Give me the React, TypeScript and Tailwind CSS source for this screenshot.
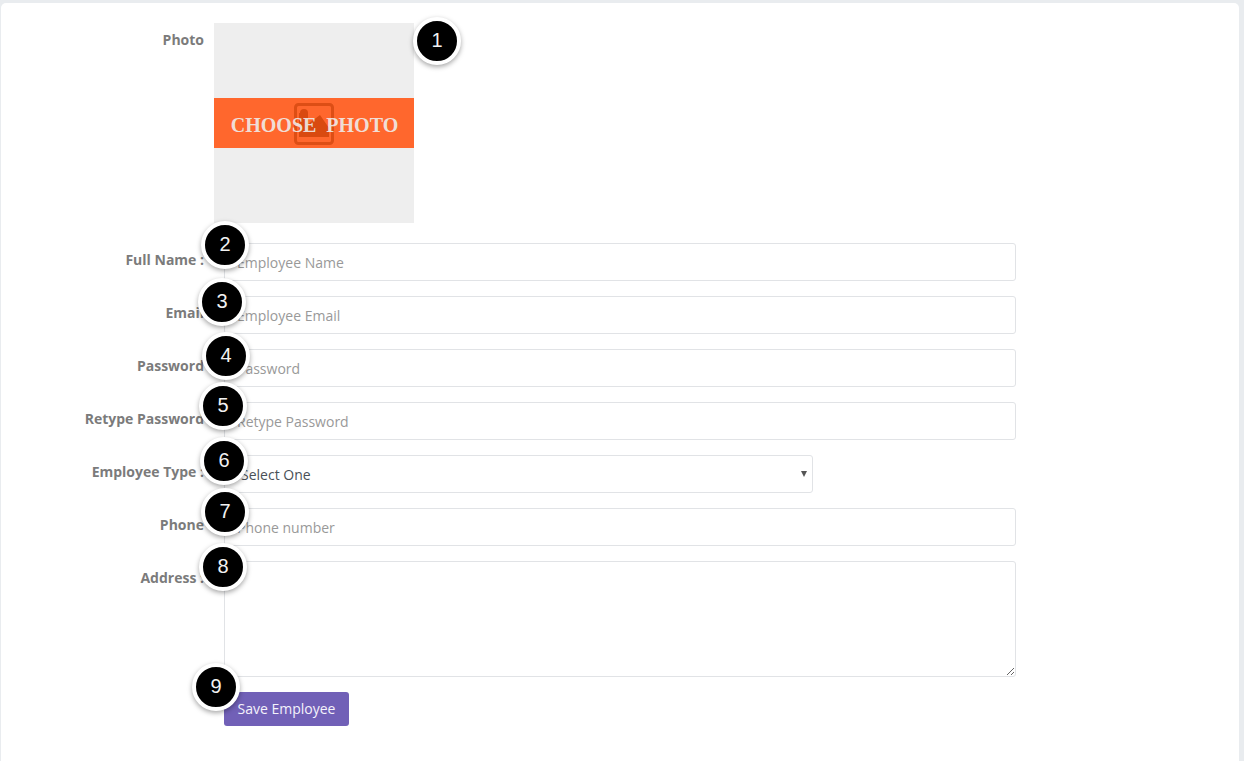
const badges = [
  { n: 1, className: 'left-[412px] top-[14px]' },
  { n: 2, className: 'left-[200px] top-[218px]' },
  { n: 3, className: 'left-[197px] top-[275px]' },
  { n: 4, className: 'left-[201px] top-[329px]' },
  { n: 5, className: 'left-[198px] top-[379px]' },
  { n: 6, className: 'left-[199px] top-[434px]' },
  { n: 7, className: 'left-[200px] top-[485px]' },
  { n: 8, className: 'left-[198px] top-[540px]' },
  { n: 9, className: 'left-[191px] top-[660px]' },
];

const inputClass =
  'h-[38px] w-[792px] rounded-[3px] border border-[#e1e3e6] bg-white px-3 text-sm text-[#495057] outline-none placeholder:text-[#999999]';

const Label = ({ children }: { children: string }) => (
  <label className="w-[203px] shrink-0 pt-[6px] text-right text-sm leading-[21px] font-bold text-[#7b7b7b]">
    {children}
  </label>
);

const Row = ({ label, placeholder }: { label: string; placeholder: string }) => (
  <div className="flex gap-5">
    <Label>{label}</Label>
    <input type="text" placeholder={placeholder} className={inputClass} />
  </div>
);

export default function App() {
  return (
    <div className="h-[761px] overflow-hidden bg-[#e9ecef] pt-[3px] pr-[5px] pl-px font-['Open_Sans',sans-serif]">
      <div className="relative h-[800px] rounded-[5px] bg-white pt-5">
        {/* Photo */}
        <div className="mb-5 flex gap-[10px]">
          <Label>Photo</Label>
          <div className="flex h-[200px] w-[200px] items-center bg-[#eeeeee]">
            <div className="relative flex h-[50px] w-full items-center justify-center bg-[#ff672d] pt-[3px]">
              <svg viewBox="0 0 40 42" className="absolute top-[5px] left-[80px] h-[42px] w-10" fill="#d94a10">
                <rect x="1.5" y="1.5" width="37" height="39" rx="3" fill="none" stroke="#dd4e15" strokeWidth="3" />
                <circle cx="10" cy="10" r="4" />
                <path d="M5 34V10h9v11l12-9 9 13v9z" />
              </svg>
              <span className="relative ml-px font-['Liberation_Serif',serif] text-[20px] font-bold whitespace-pre text-[#eeeeee]/90">
                {'CHOOSE  PHOTO'}
              </span>
            </div>
          </div>
        </div>

        {/* Fields */}
        <div className="flex flex-col gap-[15px]">
          <Row label="Full Name :" placeholder="Employee Name" />
          <Row label="Email" placeholder="Employee Email" />
          <Row label="Password" placeholder="Password" />
          <Row label="Retype Password" placeholder="Retype Password" />
          <div className="flex gap-5">
            <Label>Employee Type :</Label>
            <div className="relative w-[589px]">
              <select className="h-[38px] w-full appearance-none rounded-[3px] border border-[#e1e3e6] bg-white px-4 pt-[2px] text-sm text-[#495057] outline-none">
                <option>Select One</option>
              </select>
              <svg viewBox="0 0 6 6" className="absolute top-[16px] right-[6px] h-[6px] w-[6px]" fill="#555555">
                <path d="M0 0h6L3 6z" />
              </svg>
            </div>
          </div>
          <Row label="Phone" placeholder="Phone number" />
          <div className="flex gap-5">
            <Label>Address :</Label>
            <textarea className="h-[116px] w-[792px] rounded-[3px] border border-[#e1e3e6] bg-white px-3 py-2 text-sm outline-none" />
          </div>
          <div className="pl-[223px]">
            <button className="h-[34px] w-[125px] rounded-[3px] bg-[#7160b7] text-sm text-[#f4f2fb]">
              Save Employee
            </button>
          </div>
        </div>

        {/* Numbered markers */}
        {badges.map((b) => (
          <div
            key={b.n}
            className={`absolute flex h-12 w-12 items-center justify-center rounded-full border-4 border-white bg-black pb-[3px] font-['Liberation_Sans',sans-serif] text-xl text-[#f2f2f2] shadow-[0_2px_5px_rgba(0,0,0,0.35)] ${b.className}`}
          >
            {b.n}
          </div>
        ))}
      </div>
    </div>
  );
}
